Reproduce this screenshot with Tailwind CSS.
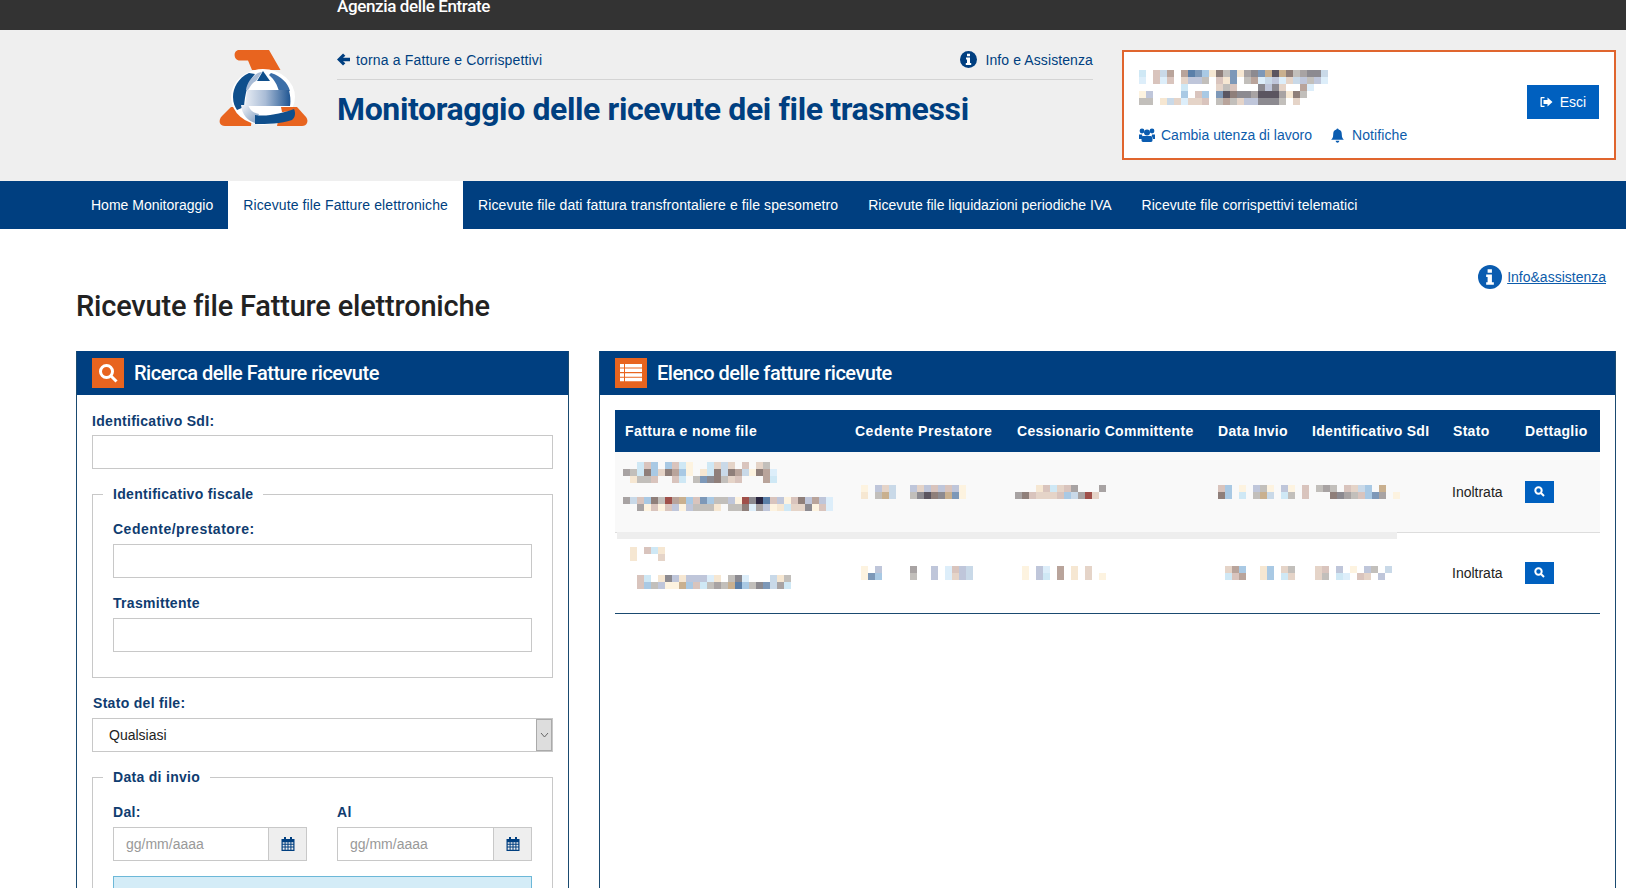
<!DOCTYPE html>
<html lang="it">

<head>
    <meta charset="UTF-8">
    <meta name="viewport" content="width=device-width, initial-scale=1">
    <title>Monitoraggio delle ricevute dei file trasmessi</title>
    <script src="https://cdn.jsdelivr.net/npm/@tailwindcss/browser@4"></script>
</head>

<body class="h-screen overflow-hidden bg-white font-['Liberation_Sans',sans-serif] text-sm text-[#222]">
    <!-- top bar -->
    <div class="h-[30px] overflow-hidden bg-[#333] pl-[337px]">
        <div class="-mt-[8px] font-['Roboto',sans-serif] text-[17px] leading-[28px] font-medium tracking-[-0.37px] text-white">Agenzia delle Entrate</div>
    </div>

    <!-- header -->
    <header class="flex h-[151px] bg-[#efefef]">
        <svg class="mt-[15px] ml-[215px] h-[85px] w-[100px] shrink-0" viewBox="0 0 100 85">
            <defs>
                <linearGradient id="eBar" x1="0" x2="1" y1="0" y2="0">
                    <stop offset="0" stop-color="#e8edf4" />
                    <stop offset="0.45" stop-color="#a9bcd6" />
                    <stop offset="1" stop-color="#1f5592" />
                </linearGradient>
                <linearGradient id="eLeft" x1="0" x2="1" y1="0" y2="1">
                    <stop offset="0" stop-color="#f3f5f9" />
                    <stop offset="1" stop-color="#7f9cc0" />
                </linearGradient>
            </defs>
            <path fill="#e8641f" d="M24 5H54L65.5 25H37L33 15.5H25C18 15.5 18 5 24 5Z" />
            <path fill="#e8641f" d="M16 62H38L36 81H10C4 81 3 75 7 71Z" />
            <path fill="#e8641f" d="M66 62H82L91 72C94 76 92 81 87 81H62Z" />
            <ellipse cx="48" cy="52" rx="32" ry="28" fill="#fff" />
            <path fill="#0f4f8c" d="M34 28C23 33 18 43 18 52C18 58 20 62 22 65L29 62C30 50 32 38 40 29Z" />
            <path fill="#3b6ea8" d="M56 28C66 31 73 38 75 46H64C62 40 60 35 54 30Z" />
            <path fill="#0f4f8c" d="M48 26L55 36H42Z" />
            <path fill="#a9bcd6" d="M40 30C42 28 45 27 47 27L41 36C38 37 36 40 33 45H31C32 38 36 33 40 30Z" />
            <path fill="url(#eBar)" d="M32 45H74C75 50 76 55 75 61H30Z" />
            <path fill="url(#eLeft)" d="M26 60H33C35 65 38 68 44 69L40 78C33 76 27 70 26 60Z" />
            <path fill="#e8641f" d="M66 62H78L80 65C76 66 70 67 67 67Z" />
            <path fill="#0f4f8c" d="M40 70C52 72 68 68 79 64C81 68 80 73 77 75C66 79 52 79 40 79Z" />
        </svg>

        <div class="ml-[22px] w-[756px] shrink-0">
            <div class="flex h-[50px] items-center justify-between border-b border-[#d4d4d4] pt-[10px]">
                <a class="flex items-center gap-[6px] tracking-[0.16px] text-[#003f80]" href="#">
                    <svg class="h-[13px] w-[13px]" viewBox="0 0 14 14" fill="#003f80">
                        <path d="M0 7L6.5 0.5L9 3L6.5 5H14V9H6.5L9 11L6.5 13.5Z" />
                    </svg>
                    torna a Fatture e Corrispettivi
                </a>
                <a class="flex items-center gap-[8px] tracking-[0.1px] text-[#003f80]" href="#">
                    <svg class="h-[17px] w-[17px]" viewBox="0 0 17 17">
                        <circle cx="8.5" cy="8.5" r="8.5" fill="#003f80" />
                        <path fill="#fff" d="M7 2.8H10V5.3H7ZM6 6.5H10V12H11.2V14H5.8V12H7V8.5H6Z" />
                    </svg>
                    Info e Assistenza
                </a>
            </div>
            <h1 class="mt-[7px] font-['Roboto',sans-serif] text-[32px] leading-[44px] font-bold tracking-[-0.38px] text-[#003f80]">Monitoraggio delle ricevute dei file trasmessi</h1>
        </div>

        <div class="mt-[20px] ml-[29px] flex h-[110px] w-[494px] shrink-0 items-start border-2 border-[#e0652e] bg-white pr-[15px] pl-[15px]">
            <div class="mt-[18px] flex-1">
                <svg data-mosaic="i.cah.hplbfjglfdeltktjgdeea|r.crc.mqqg.cfl.ghraqrmaqgqr|......i....mgc...eqem..hr"></svg>
                <svg data-mosaic="sq....b.cb.lkjeedkkkdfjg|gg.famrmmc.ghgmqqeeeg.m"></svg>
                <div class="mt-[20px] flex items-center leading-[20px] text-[#0d5cab]">
                    <svg class="mr-[6px] h-[14px] w-[16px]" viewBox="0 0 16 14" fill="#0a5cb0">
                        <circle cx="3" cy="3" r="2.4" />
                        <circle cx="13" cy="3" r="2.4" />
                        <circle cx="8" cy="4.5" r="3" />
                        <path d="M0 6.5H3L3.5 9H3V11H0Z M16 6.5H13L12.5 9H13V11H16Z M4 8H12C13 8 13.5 9 13.5 10.5V12C13.5 13 13 14 12 14H4C3 14 2.5 13 2.5 12V10.5C2.5 9 3 8 4 8Z" />
                    </svg>
                    Cambia utenza di lavoro
                    <svg class="mr-[7px] ml-[18px] h-[15px] w-[15px]" viewBox="0 0 14 14" fill="#0a5cb0">
                        <path d="M7 0.5C8 0.5 8 1.5 8 1.5C10.5 2 11 4 11 6C11 9 12 10 13 11H1C2 10 3 9 3 6C3 4 3.5 2 6 1.5C6 1.5 6 0.5 7 0.5ZM5.3 12H8.7C8.7 13 8 13.8 7 13.8C6 13.8 5.3 13 5.3 12Z" />
                    </svg>
                    <span class="tracking-[0.1px]">Notifiche</span>
                </div>
            </div>
            <a class="mt-[33px] flex h-[34px] w-[72px] items-center justify-center gap-[7px] bg-[#0060bf] text-white" href="#">
                <svg class="h-[12px] w-[13px]" viewBox="0 0 13 12" fill="#fff">
                    <path d="M4.5 1H1.5C0.8 1 0.5 1.5 0.5 2V10C0.5 10.5 0.8 11 1.5 11H4.5V9.8H1.8V2.2H4.5Z" />
                    <path d="M7.5 1.5L12.5 6L7.5 10.5V8H3.5V4H7.5Z" />
                </svg>
                Esci
            </a>
        </div>
    </header>

    <!-- nav -->
    <nav class="flex h-[48px] items-stretch bg-[#003f80] pl-[76px] text-white">
        <a class="flex items-center px-[15px]" href="#">Home Monitoraggio</a>
        <a class="flex items-center bg-white px-[15px] tracking-[0.12px] text-[#003f80]" href="#">Ricevute file Fatture elettroniche</a>
        <a class="flex items-center px-[15px] tracking-[0.1px]" href="#">Ricevute file dati fattura transfrontaliere e file spesometro</a>
        <a class="flex items-center px-[15px]" href="#">Ricevute file liquidazioni periodiche IVA</a>
        <a class="flex items-center px-[15px] tracking-[0.05px]" href="#">Ricevute file corrispettivi telematici</a>
    </nav>

    <!-- page title -->
    <div class="flex h-[122px] items-start justify-between pr-[20px] pl-[76px]">
        <h2 class="mt-[57px] font-['Roboto',sans-serif] text-[29px] leading-[40px] font-medium tracking-[-0.2px] text-[#222]">Ricevute file Fatture elettroniche</h2>
        <a class="mt-[36px] flex items-center gap-[5px] text-[#0d5cab] underline" href="#">
            <svg class="h-[24px] w-[24px]" viewBox="0 0 25 25">
                <circle cx="12.5" cy="12.5" r="12.5" fill="#0a5cb0" />
                <path fill="#fff" d="M10 4.5H14.5V8H10ZM8.5 10H14.5V18H16.5V20.5H8.5V18H10V12.5H8.5Z" />
            </svg>
            Info&amp;assistenza
        </a>
    </div>

    <main class="flex gap-[30px] pl-[76px]">
        <!-- search panel -->
        <section class="h-[537px] w-[493px] shrink-0 overflow-hidden border-x border-[#1a4a70]">
            <div class="-mx-px flex h-[44px] items-center gap-[10px] bg-[#003f80] pl-[16px]">
                <div class="flex h-[30px] w-[32px] items-center justify-center bg-[#e8641f]">
                    <svg class="h-[20px] w-[20px]" viewBox="0 0 20 20" fill="none" stroke="#fff" stroke-width="3">
                        <circle cx="8.5" cy="8.5" r="6" />
                        <path d="M13 13L18.5 18.5" />
                    </svg>
                </div>
                <span class="font-['Roboto',sans-serif] text-[20px] font-medium tracking-[-0.5px] text-white">Ricerca delle Fatture ricevute</span>
            </div>

            <div class="px-[15px] pt-[16px] font-bold tracking-[0.3px] text-[#0f3c70]">
                <label class="block leading-[20px]" for="sdi">Identificativo SdI:</label>
                <input id="sdi" type="text" class="mt-[4px] block h-[34px] w-full border border-[#c8c8c8] bg-white">

                <fieldset class="mt-[15px] border border-[#c8c8c8] px-[20px] pb-[25px]">
                    <legend class="-ml-[10px] px-[10px] leading-[20px]">Identificativo fiscale</legend>
                    <label class="mt-[15px] block leading-[20px] tracking-[0.5px]" for="cedente">Cedente/prestatore:</label>
                    <input id="cedente" type="text" class="mt-[5px] block h-[34px] w-full border border-[#c8c8c8] bg-white">
                    <label class="mt-[15px] block leading-[20px]" for="trasm">Trasmittente</label>
                    <input id="trasm" type="text" class="mt-[5px] block h-[34px] w-full border border-[#c8c8c8] bg-white">
                </fieldset>

                <label class="mt-[15px] block pl-px leading-[20px]">Stato del file:</label>
                <div class="mt-[5px] flex h-[34px] items-stretch border border-[#c8c8c8] bg-white pl-[16px] font-normal tracking-normal text-[#222]">
                    <span class="flex-1 self-center">Qualsiasi</span>
                    <span class="flex w-[16px] items-center justify-center border border-[#aaa] bg-[#ddd]">
                        <svg class="h-[6px] w-[9px]" viewBox="0 0 9 6" fill="none" stroke="#666">
                            <path d="M1 1L4.5 5L8 1" />
                        </svg>
                    </span>
                </div>

                <fieldset class="mt-[15px] border border-[#c8c8c8] px-[20px]">
                    <legend class="-ml-[10px] px-[10px] leading-[20px]">Data di invio</legend>
                    <div class="mt-[15px] grid grid-cols-[194px_195px] gap-[30px]">
                        <div>
                            <label class="block leading-[20px]" for="dal">Dal:</label>
                            <div class="mt-[5px] flex h-[34px] border border-[#c8c8c8] font-normal tracking-normal">
                                <input id="dal" type="text" placeholder="gg/mm/aaaa" class="w-0 flex-1 pl-[12px] placeholder:text-[#999]">
                                <span class="flex w-[38px] items-center justify-center border-l border-[#c8c8c8] bg-[#eee]">
                                    <svg class="h-[14px] w-[14px]" viewBox="0 0 14 14" fill="#003f80">
                                        <path fill-rule="evenodd" d="M3 0H5V2H9V0H11V2H13.5V14H0.5V2H3ZM1.7 5.2V6.8H3.6V5.2ZM4.6 5.2V6.8H6.5V5.2ZM7.5 5.2V6.8H9.4V5.2ZM10.4 5.2V6.8H12.3V5.2ZM1.7 7.8V9.4H3.6V7.8ZM4.6 7.8V9.4H6.5V7.8ZM7.5 7.8V9.4H9.4V7.8ZM10.4 7.8V9.4H12.3V7.8ZM1.7 10.4V12.8H3.6V10.4ZM4.6 10.4V12.8H6.5V10.4ZM7.5 10.4V12.8H9.4V10.4ZM10.4 10.4V12.8H12.3V10.4Z" />
                                    </svg>
                                </span>
                            </div>
                        </div>
                        <div>
                            <label class="block leading-[20px]" for="al">Al</label>
                            <div class="mt-[5px] flex h-[34px] border border-[#c8c8c8] font-normal tracking-normal">
                                <input id="al" type="text" placeholder="gg/mm/aaaa" class="w-0 flex-1 pl-[12px] placeholder:text-[#999]">
                                <span class="flex w-[38px] items-center justify-center border-l border-[#c8c8c8] bg-[#eee]">
                                    <svg class="h-[14px] w-[14px]" viewBox="0 0 14 14" fill="#003f80">
                                        <path fill-rule="evenodd" d="M3 0H5V2H9V0H11V2H13.5V14H0.5V2H3ZM1.7 5.2V6.8H3.6V5.2ZM4.6 5.2V6.8H6.5V5.2ZM7.5 5.2V6.8H9.4V5.2ZM10.4 5.2V6.8H12.3V5.2ZM1.7 7.8V9.4H3.6V7.8ZM4.6 7.8V9.4H6.5V7.8ZM7.5 7.8V9.4H9.4V7.8ZM10.4 7.8V9.4H12.3V7.8ZM1.7 10.4V12.8H3.6V10.4ZM4.6 10.4V12.8H6.5V10.4ZM7.5 10.4V12.8H9.4V10.4ZM10.4 10.4V12.8H12.3V10.4Z" />
                                    </svg>
                                </span>
                            </div>
                        </div>
                    </div>
                    <div class="mt-[15px] h-[60px] border border-[#6cb8d8] bg-[#d4ecf7]"></div>
                </fieldset>
            </div>
        </section>

        <!-- results panel -->
        <section class="h-[537px] w-[1017px] shrink-0 overflow-hidden border-x border-[#1a4a70]">
            <div class="-mx-px flex h-[44px] items-center gap-[10px] bg-[#003f80] pl-[16px]">
                <div class="flex h-[30px] w-[32px] items-center justify-center bg-[#e8641f]">
                    <svg class="h-[18px] w-[22px]" viewBox="0 0 22 18" fill="#fff">
                        <path d="M0 0H4V3.5H0ZM5 0H22V3.5H5ZM0 4.6H4V8.1H0ZM5 4.6H22V8.1H5ZM0 9.2H4V12.7H0ZM5 9.2H22V12.7H5ZM0 13.8H4V17.3H0ZM5 13.8H22V17.3H5Z" />
                    </svg>
                </div>
                <span class="font-['Roboto',sans-serif] text-[20px] font-medium tracking-[-0.5px] text-white">Elenco delle fatture ricevute</span>
            </div>

            <div class="relative mx-[15px] mt-[15px]">
                <table class="w-full table-fixed">
                    <colgroup>
                        <col class="w-[230px]">
                        <col class="w-[162px]">
                        <col class="w-[201px]">
                        <col class="w-[94px]">
                        <col class="w-[141px]">
                        <col class="w-[72px]">
                        <col class="w-[85px]">
                    </colgroup>
                    <thead class="bg-[#003f80] text-left font-bold tracking-[0.3px] whitespace-nowrap text-white">
                        <tr class="h-[42px]">
                            <th class="pl-[10px] tracking-[0.4px]">Fattura e nome file</th>
                            <th class="pl-[10px] tracking-[0.5px]">Cedente Prestatore</th>
                            <th class="pl-[10px]">Cessionario Committente</th>
                            <th class="pl-[10px]">Data Invio</th>
                            <th class="pl-[10px]">Identificativo SdI</th>
                            <th class="pl-[10px]">Stato</th>
                            <th class="pl-[10px]">Dettaglio</th>
                        </tr>
                    </thead>
                    <tbody>
                        <tr class="h-[80px] border-b border-[#ddd] bg-[#f9f9f9]">
                            <td class="pb-[11px] pl-[8px]">
                                <svg data-mosaic="..icb.bcis..imam.c.mg.|dgijbmjhbs.fijajhasjhr|.fggc..ci.glejgmc...hi"></svg>
                                <svg class="mt-[14px]" data-mosaic="dacbjgnhtbclbggqsneopcqscjqhqr|..dscscqsqgggf.ggjrdqsfimmescr"></svg>
                            </td>
                            <td class="pl-[16px]"><svg data-mosaic="s.qma..qmqcqcqs|f.gta..gekjetls"></svg></td>
                            <td class="pl-[8px]"><svg data-mosaic="...fcimcd...d...|djcmmmcbadnm.."></svg></td>
                            <td class="pl-[10px]"><svg data-mosaic="cb.s.qgs.qs.c|jb.i.gta.ig.c"></svg></td>
                            <td class="pl-[14px]"><svg data-mosaic="gdg.cmab.t.|..jedgcbld.s"></svg></td>
                            <td class="pl-[9px]">Inoltrata</td>
                            <td class="pl-[10px]">
                                <a class="flex h-[22px] w-[29px] items-center justify-center bg-[#0060bf]" href="#">
                                    <svg class="h-[11px] w-[11px]" viewBox="0 0 11 11" fill="none" stroke="#fff" stroke-width="2">
                                        <circle cx="4.5" cy="4.5" r="3.2" />
                                        <path d="M7 7L10 10" />
                                    </svg>
                                </a>
                            </td>
                        </tr>
                        <tr class="h-[81px] border-b border-[#1a4a70]">
                            <td class="pb-[10px] pl-[15px]">
                                <svg data-mosaic="f.cif|f...m"></svg>
                                <svg class="mt-[14px] ml-[7px]" data-mosaic="ci.feqfqqqrf.ger...afg|cbgqsstbcigdgtpbgeladi"></svg>
                            </td>
                            <td class="pl-[16px]"><svg data-mosaic="s.q....d..q.rcqa|slb....g..q.rmqa"></svg></td>
                            <td class="pl-[15px]"><svg data-mosaic="s.qr.h.f.m..|s.qi.h.f.m.s"></svg></td>
                            <td class="pl-[17px]"><svg data-mosaic="mhb..fb.mg|ich..fb.im"></svg></td>
                            <td class="pl-[13px]"><svg data-mosaic="mc.q.s.qg.a|mg.ir.cm.q."></svg></td>
                            <td class="pl-[9px]">Inoltrata</td>
                            <td class="pl-[10px]">
                                <a class="flex h-[22px] w-[29px] items-center justify-center bg-[#0060bf]" href="#">
                                    <svg class="h-[11px] w-[11px]" viewBox="0 0 11 11" fill="none" stroke="#fff" stroke-width="2">
                                        <circle cx="4.5" cy="4.5" r="3.2" />
                                        <path d="M7 7L10 10" />
                                    </svg>
                                </a>
                            </td>
                        </tr>
                    </tbody>
                </table>
                <!-- leftover strip under the first row, as in the capture -->
                <div class="absolute top-[122px] left-[2px] h-[7px] w-[780px] bg-[#eee]"></div>
            </div>
        </section>
    </main>

    <script>
        // blurred-out values: each letter is one 7px cell of the mosaic
        const palette = {
            a: '#c9d9e8', b: '#a9c9e4', c: '#d9c4bd', d: '#a8a3a3', e: '#8c8a90', f: '#f6e7d2', g: '#c2bfbb',
            h: '#b9a49b', i: '#cfe8f5', j: '#8f7f7a', k: '#5b5560', l: '#7d98b8', m: '#e5d4c8', n: '#a0504a',
            o: '#2a2540', p: '#5b7fa8', q: '#bfc6da', r: '#ddeefa', s: '#fdf3e0', t: '#c9b08f'
        }

        document.querySelectorAll('[data-mosaic]').forEach(svg => {
            const rows = svg.dataset.mosaic.split('|')
            const cols = Math.max(...rows.map(row => row.length))
            svg.setAttribute('width', cols * 7)
            svg.setAttribute('height', rows.length * 7)
            svg.innerHTML = rows.map((row, y) => [...row].map((ch, x) =>
                palette[ch] ? `<rect x="${x * 7}" y="${y * 7}" width="7" height="7" fill="${palette[ch]}"/>` : ''
            ).join('')).join('')
        })
    </script>
</body>

</html>
